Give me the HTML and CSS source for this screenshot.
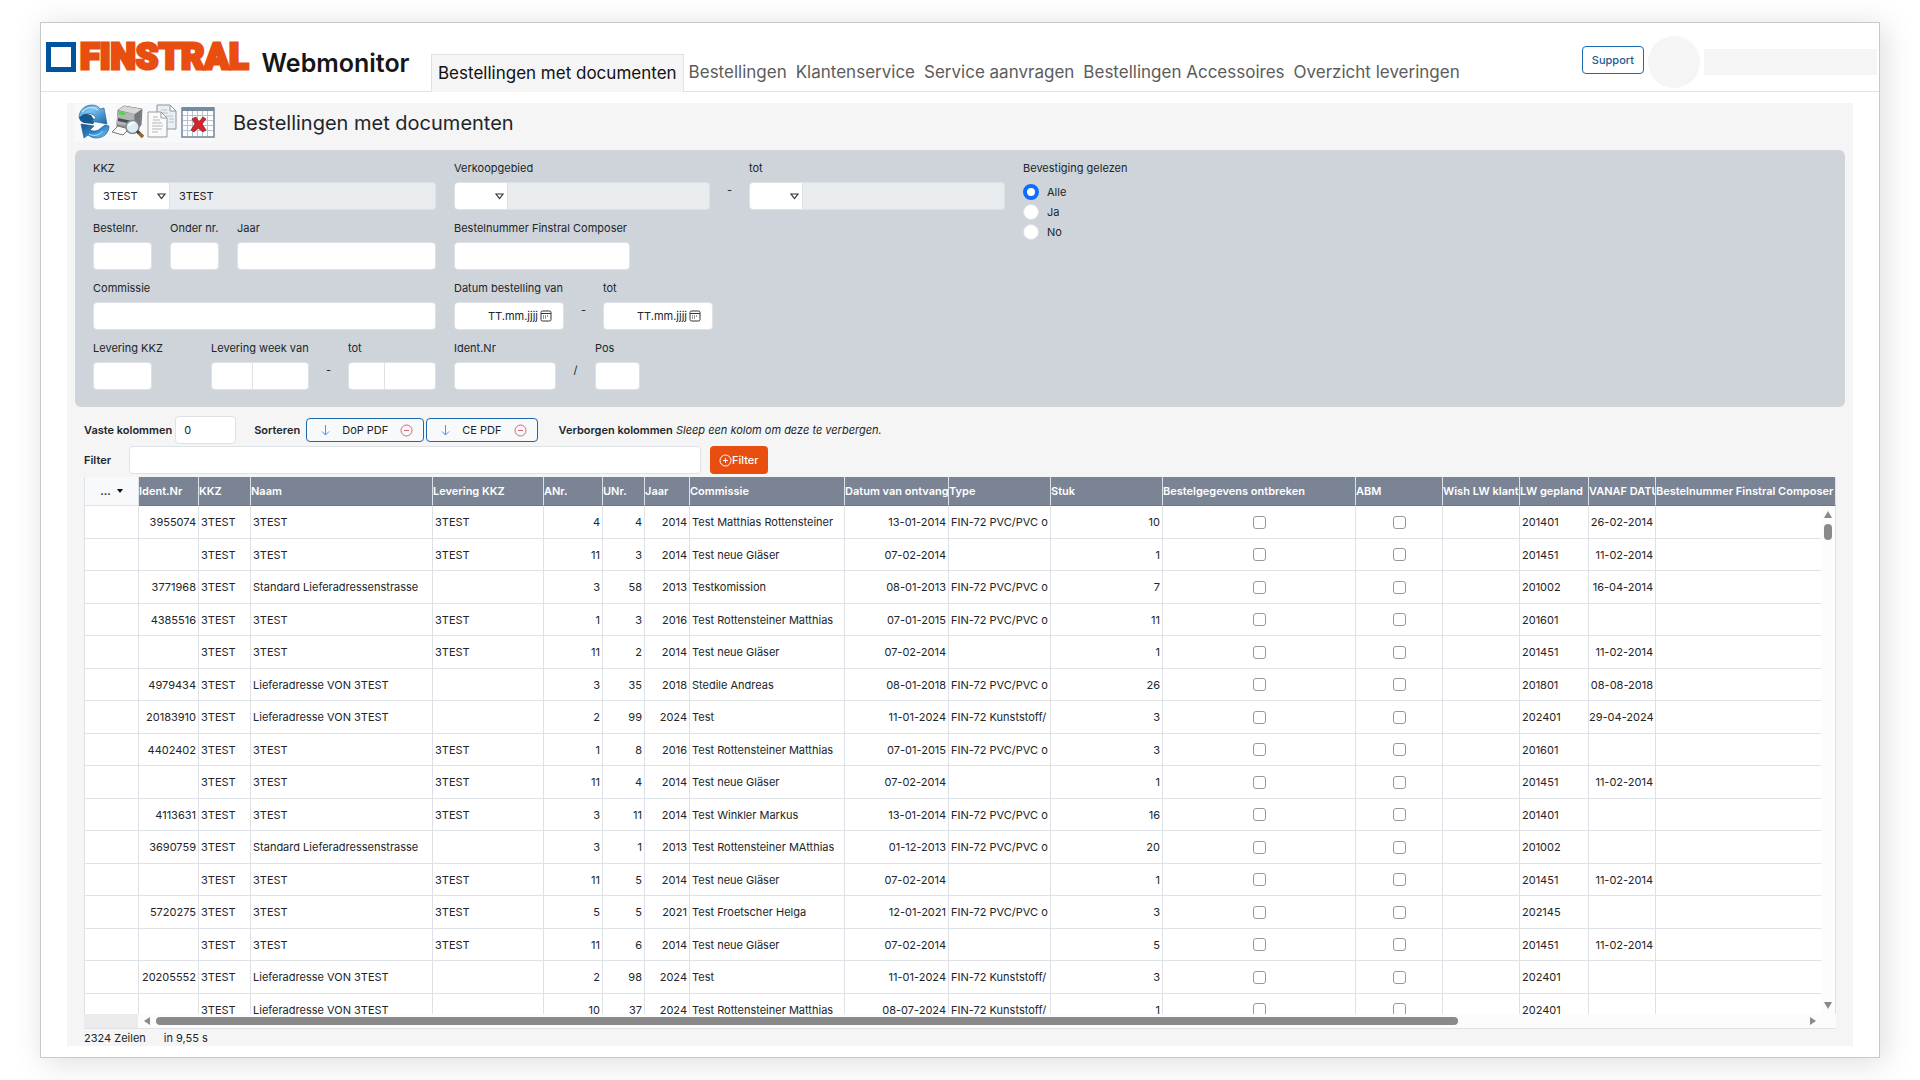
FILE: index.html
```html
<!DOCTYPE html>
<html lang="nl">
<head>
  <meta charset="UTF-8">
  <meta name="viewport" content="width=device-width, initial-scale=1.0">
  <title>Webmonitor</title>
  <link rel="stylesheet" href="styles.css">
</head>
<body>
  <div class="window">
    <header class="header">
      <a class="logo" href="#">
        <svg class="logo-mark" width="30" height="30" viewBox="0 0 30 30" aria-hidden="true"><path d="M2.5 2.5h25v25h-25z" fill="#fff" stroke="#00549f" stroke-width="5"/></svg>
        <span class="logo-name">FINSTRAL</span>
        <span class="logo-app">Webmonitor</span>
      </a>
      <nav class="tabs">
        <a class="tab active" href="#">Bestellingen met documenten</a>
        <a class="tab" href="#">Bestellingen</a>
        <a class="tab" href="#">Klantenservice</a>
        <a class="tab" href="#">Service aanvragen</a>
        <a class="tab" href="#">Bestellingen Accessoires</a>
        <a class="tab" href="#">Overzicht leveringen</a>
      </nav>
      <div class="user">
        <button class="support" type="button">Support</button>
        <span class="avatar"></span>
        <span class="user-name"></span>
      </div>
    </header>

    <main class="panel">
      <div class="toolbar">
        <div class="tools">
          <button class="tool" type="button" aria-label="Vernieuwen">
            <svg width="34" height="36" viewBox="0 0 34 36">
              <defs>
                <linearGradient id="blueTop" x1="0" y1="0" x2="1" y2="1"><stop offset="0" stop-color="#2f7fc2"/><stop offset=".35" stop-color="#7cc4f0"/><stop offset="1" stop-color="#1763a8"/></linearGradient>
                <linearGradient id="blueLow" x1="0" y1="0" x2="1" y2="1"><stop offset="0" stop-color="#15528c"/><stop offset=".5" stop-color="#2b84c8"/><stop offset="1" stop-color="#7cc6f2"/></linearGradient>
              </defs>
              <path d="M3 13c0 3 2 5 5 6l9 1 2-3-4-6-7-2z" fill="#17588f"/>
              <path d="M3 14C3 6 9 1 16 1c4 0 6 1 8 4l4-1 3 16-16-3 5-3c-2-4-6-5-10-4-3 0-5 2-7 4z" fill="url(#blueTop)" stroke="#1c5c96" stroke-width=".6"/>
              <path d="M5 20l13 2-4 4c4 2 8 1 11-2l4-3 4 1c0 7-5 12-13 12-3 0-5-1-8-3l-4 3z" fill="url(#blueLow)" stroke="#174f84" stroke-width=".6"/>
              <path d="M6 8c4-5 11-6 16-2" fill="none" stroke="#b4e2fb" stroke-width="1.5"/>
              <path d="M13 30c5 3 11 1 14-3" fill="none" stroke="#9ad6f8" stroke-width="1.2"/>
            </svg>
          </button>
          <button class="tool" type="button" aria-label="Afdrukvoorbeeld">
            <svg width="34" height="36" viewBox="0 0 34 36">
              <path d="M7 6l6-4 18 3-1 16-7 8-17-6z" fill="#8d8f91" stroke="#5e6062" stroke-width=".8"/>
              <path d="M7 6l6-4 18 3-7 5z" fill="#d6d8d9"/>
              <path d="M7 7l16 3v13L5 20z" fill="#b3b6b8"/>
              <path d="M24 10l6-4-1 15-5 5z" fill="#76797b"/>
              <path d="M7 14l14 3v3L7 17z" fill="#4b4d4f"/>
              <path d="M8 9l6 1" stroke="#3ee02d" stroke-width="2.500"/>
              <path d="M7 22l11 3-6 6-11-3z" fill="#f9f9f9" stroke="#777"/>
              <circle cx="21.500" cy="23" r="6.500" fill="#dcecf6" stroke="#85898d" stroke-width="1.500"/>
              <path d="M18 22c1-3 4-4 6-3" fill="none" stroke="#fff" stroke-width="2"/>
              <path d="M27 28l5 5" stroke="#8f6a35" stroke-width="3.500"/>
              <path d="M26 27l2 2" stroke="#444" stroke-width="3"/>
            </svg>
          </button>
          <button class="tool" type="button" aria-label="Kopiëren">
            <svg width="34" height="36" viewBox="0 0 34 36">
              <path d="M11 1h13l6 6v18H11z" fill="#e8eff7" stroke="#8f9499"/>
              <path d="M24 1v6h6z" fill="#fff" stroke="#8f9499"/>
              <path d="M15 6h6M15 9h7M20 12h7M23 15h5M23 18h5" stroke="#b8c0c8"/>
              <path d="M2 8h13l6 6v19H2z" fill="#fafafa" stroke="#999"/>
              <path d="M15 8v6h6z" fill="#fff" stroke="#999"/>
              <path d="M7 13h5M7 16h7M6 19h10M6 22h11M6 25h10M6 28h6" stroke="#b5b5b5"/>
            </svg>
          </button>
          <button class="tool" type="button" aria-label="Tabel wissen">
            <svg width="34" height="36" viewBox="0 0 34 36">
              <path d="M1 4h32v29H1z" fill="#fdfdfe" stroke="#718397" stroke-width="1.500"/>
              <path d="M1 3h32v4H1z" fill="#788a9d"/>
              <path d="M2 11.500h30M2 16.500h30M2 21.500h30M2 26.500h30M6.500 7v25M11.500 7v25M16.500 7v25M21.500 7v25M26.500 7v25" stroke="#b4c2d1"/>
              <path d="M11 15l4-2 3 5 4-5 3 2-4 5 4 6-3 2-5-4-4 4-3-2 4-6z" fill="#d5242c" stroke="#9e161c" stroke-width=".7"/>
            </svg>
          </button>
        </div>
        <h1 class="title">Bestellingen met documenten</h1>
      </div>

      <form class="search" onsubmit="return false">
        <div class="col-left">
          <div class="row">
            <div class="field grow">
              <label for="kkz">KKZ</label>
              <div class="joined">
                <select class="w77" id="kkz"><option>3TEST</option></select>
                <input class="grow" type="text" value="3TEST" aria-label="KKZ naam" readonly>
              </div>
            </div>
          </div>
          <div class="row">
            <div class="field"><label for="bestelnr">Bestelnr.</label><input class="w59" type="text" id="bestelnr"></div>
            <div class="field w49"><label for="ondernr">Onder nr.</label><input class="w49" type="text" id="ondernr"></div>
            <div class="field grow"><label for="jaar">Jaar</label><input type="text" id="jaar"></div>
          </div>
          <div class="row">
            <div class="field grow"><label for="commissie">Commissie</label><input type="text" id="commissie"></div>
          </div>
          <div class="row spread">
            <div class="field"><label for="levkkz">Levering KKZ</label><input class="w59" type="text" id="levkkz"></div>
            <div class="range">
              <div class="field">
                <label for="weekvan">Levering week van</label>
                <div class="joined"><input class="w42" type="text" id="weekvan"><input class="w56" type="text" aria-label="Jaar van"></div>
              </div>
              <span class="sep">-</span>
              <div class="field">
                <label for="weektot">tot</label>
                <div class="joined"><input class="w37" type="text" id="weektot"><input class="w51" type="text" aria-label="Jaar tot"></div>
              </div>
            </div>
          </div>
        </div>

        <div class="col-mid">
          <div class="row range">
            <div class="field grow">
              <label for="gebied">Verkoopgebied</label>
              <div class="joined"><select class="w54" id="gebied"><option></option></select><input class="grow" type="text" aria-label="Verkoopgebied naam" readonly></div>
            </div>
            <span class="sep">-</span>
            <div class="field grow">
              <label for="gebiedtot">tot</label>
              <div class="joined"><select class="w54" id="gebiedtot"><option></option></select><input class="grow" type="text" aria-label="Verkoopgebied tot naam" readonly></div>
            </div>
          </div>
          <div class="row">
            <div class="field"><label for="composer">Bestelnummer Finstral Composer</label><input class="w176" type="text" id="composer"></div>
          </div>
          <div class="row range">
            <div class="field">
              <label for="datumvan">Datum bestelling van</label>
              <div class="date">
                <input type="text" id="datumvan" placeholder="TT.mm.jjjj">
                <svg width="12" height="12" viewBox="0 0 12 12"><rect x="1" y="1" width="10" height="10" rx="1.500" fill="none" stroke="#333"/><path d="M1 3.500h10" stroke="#333"/><path d="M3 6h1m1 0h1m1 0h1M3 8h1m1 0h1" stroke="#333"/></svg>
              </div>
            </div>
            <span class="sep">-</span>
            <div class="field">
              <label for="datumtot">tot</label>
              <div class="date">
                <input type="text" id="datumtot" placeholder="TT.mm.jjjj">
                <svg width="12" height="12" viewBox="0 0 12 12"><rect x="1" y="1" width="10" height="10" rx="1.500" fill="none" stroke="#333"/><path d="M1 3.500h10" stroke="#333"/><path d="M3 6h1m1 0h1m1 0h1M3 8h1m1 0h1" stroke="#333"/></svg>
              </div>
            </div>
          </div>
          <div class="row range">
            <div class="field"><label for="ident">Ident.Nr</label><input class="w102" type="text" id="ident"></div>
            <span class="sep">/</span>
            <div class="field"><label for="pos">Pos</label><input class="w45" type="text" id="pos"></div>
          </div>
        </div>

        <fieldset class="radios">
          <legend>Bevestiging gelezen</legend>
          <label><input type="radio" name="gelezen" checked>Alle</label>
          <label><input type="radio" name="gelezen">Ja</label>
          <label><input type="radio" name="gelezen">No</label>
        </fieldset>
      </form>

      <div class="options">
        <label class="strong" for="vast">Vaste kolommen</label>
        <input class="fixed-count" type="text" id="vast" value="0">
        <span class="strong">Sorteren</span>
        <div class="chips">
          <button class="chip" type="button">
            <svg width="9" height="12" viewBox="0 0 9 12"><path d="M4.500 1v10M1 7.500l3.500 3.500L8 7.500" fill="none" stroke="#4a8dfb"/></svg>
            DoP PDF
            <svg width="13" height="13" viewBox="0 0 13 13"><circle cx="6.500" cy="6.500" r="5.500" fill="none" stroke="#e0626c"/><path d="M4 6.500h5" stroke="#e0626c"/></svg>
          </button>
          <button class="chip" type="button">
            <svg width="9" height="12" viewBox="0 0 9 12"><path d="M4.500 1v10M1 7.500l3.500 3.500L8 7.500" fill="none" stroke="#4a8dfb"/></svg>
            CE PDF
            <svg width="13" height="13" viewBox="0 0 13 13"><circle cx="6.500" cy="6.500" r="5.500" fill="none" stroke="#e0626c"/><path d="M4 6.500h5" stroke="#e0626c"/></svg>
          </button>
        </div>
        <span><b class="strong">Verborgen kolommen</b> <i>Sleep een kolom om deze te verbergen.</i></span>
      </div>

      <div class="filter">
        <label class="strong" for="filter">Filter</label>
        <input type="text" id="filter">
        <button class="filter-btn" type="button">
          <svg width="13" height="13" viewBox="0 0 13 13"><circle cx="6.500" cy="6.500" r="5.500" fill="none" stroke="#fff"/><path d="M4 6.500h5M6.500 4v5" stroke="#fff"/></svg>Filter
        </button>
      </div>

      <div class="grid">
        <div class="grid-view">
          <table>
            <colgroup>
              <col class="w55"><col class="w60"><col class="w52"><col class="w182"><col class="w111"><col class="w59"><col class="w42"><col class="w45"><col class="w155"><col class="w104"><col class="w102"><col class="w112"><col class="w193"><col class="w87"><col class="w77"><col class="w69"><col class="w67"><col>
            </colgroup>
            <thead>
              <tr>
                <th class="menu-cell"><button type="button">... <svg width="6" height="4" viewBox="0 0 6 4"><path d="M0 0h6L3 4z" fill="#111"/></svg></button></th>
                <th>Ident.Nr</th><th>KKZ</th><th>Naam</th><th>Levering KKZ</th><th>ANr.</th><th>UNr.</th><th>Jaar</th><th>Commissie</th><th>Datum van ontvangst</th><th>Type</th><th>Stuk</th><th>Bestelgegevens ontbreken</th><th>ABM</th><th>Wish LW klant</th><th>LW gepland</th><th>VANAF DATUM</th><th>Bestelnummer Finstral Composer</th>
              </tr>
            </thead>
            <tbody id="orders"></tbody>
          </table>
          <div class="vscroll">
            <svg width="8" height="7" viewBox="0 0 8 7"><path d="M4 0l4 7H0z" fill="#8a8a8a"/></svg>
            <span class="vthumb"></span>
            <svg class="end" width="8" height="7" viewBox="0 0 8 7"><path d="M0 0h8L4 7z" fill="#8a8a8a"/></svg>
          </div>
        </div>
        <div class="hscroll">
          <span class="corner"></span>
          <svg width="6" height="8" viewBox="0 0 6 8"><path d="M6 0v8L0 4z" fill="#8a8a8a"/></svg>
          <div class="track"><span class="hthumb"></span></div>
          <svg width="6" height="8" viewBox="0 0 6 8"><path d="M0 0v8l6-4z" fill="#8a8a8a"/></svg>
        </div>
      </div>
      <footer class="status"><span>2324 Zeilen</span><span>in 9,55 s</span></footer>
    </main>
  </div>

  <script>
    // ident, kkz, naam, levering, anr, unr, jaar, commissie, datum, type, stuk, lw gepland, vanaf datum
    const orders = [
      ["3955074", "3TEST", "3TEST", "3TEST", 4, 4, 2014, "Test Matthias Rottensteiner", "13-01-2014", "FIN-72 PVC/PVC o", 10, "201401", "26-02-2014"],
      ["", "3TEST", "3TEST", "3TEST", 11, 3, 2014, "Test neue Gläser", "07-02-2014", "", 1, "201451", "11-02-2014"],
      ["3771968", "3TEST", "Standard Lieferadressenstrasse", "", 3, 58, 2013, "Testkomission", "08-01-2013", "FIN-72 PVC/PVC o", 7, "201002", "16-04-2014"],
      ["4385516", "3TEST", "3TEST", "3TEST", 1, 3, 2016, "Test Rottensteiner Matthias", "07-01-2015", "FIN-72 PVC/PVC o", 11, "201601", ""],
      ["", "3TEST", "3TEST", "3TEST", 11, 2, 2014, "Test neue Gläser", "07-02-2014", "", 1, "201451", "11-02-2014"],
      ["4979434", "3TEST", "Lieferadresse VON 3TEST", "", 3, 35, 2018, "Stedile Andreas", "08-01-2018", "FIN-72 PVC/PVC o", 26, "201801", "08-08-2018"],
      ["20183910", "3TEST", "Lieferadresse VON 3TEST", "", 2, 99, 2024, "Test", "11-01-2024", "FIN-72 Kunststoff/", 3, "202401", "29-04-2024"],
      ["4402402", "3TEST", "3TEST", "3TEST", 1, 8, 2016, "Test Rottensteiner Matthias", "07-01-2015", "FIN-72 PVC/PVC o", 3, "201601", ""],
      ["", "3TEST", "3TEST", "3TEST", 11, 4, 2014, "Test neue Gläser", "07-02-2014", "", 1, "201451", "11-02-2014"],
      ["4113631", "3TEST", "3TEST", "3TEST", 3, 11, 2014, "Test Winkler Markus", "13-01-2014", "FIN-72 PVC/PVC o", 16, "201401", ""],
      ["3690759", "3TEST", "Standard Lieferadressenstrasse", "", 3, 1, 2013, "Test Rottensteiner MAtthias", "01-12-2013", "FIN-72 PVC/PVC o", 20, "201002", ""],
      ["", "3TEST", "3TEST", "3TEST", 11, 5, 2014, "Test neue Gläser", "07-02-2014", "", 1, "201451", "11-02-2014"],
      ["5720275", "3TEST", "3TEST", "3TEST", 5, 5, 2021, "Test Froetscher Helga", "12-01-2021", "FIN-72 PVC/PVC o", 3, "202145", ""],
      ["", "3TEST", "3TEST", "3TEST", 11, 6, 2014, "Test neue Gläser", "07-02-2014", "", 5, "201451", "11-02-2014"],
      ["20205552", "3TEST", "Lieferadresse VON 3TEST", "", 2, 98, 2024, "Test", "11-01-2024", "FIN-72 Kunststoff/", 3, "202401", ""],
      ["", "3TEST", "Lieferadresse VON 3TEST", "", 10, 37, 2024, "Test Rottensteiner Matthias", "08-07-2024", "FIN-72 Kunststoff/", 1, "202401", ""]
    ];

    function renderOrders() {
      const num = v => `<td class="num">${v}</td>`;
      const txt = v => `<td>${v}</td>`;
      const box = name => `<td class="check"><input type="checkbox" aria-label="${name}"></td>`;
      document.getElementById("orders").innerHTML = orders.map(o => `<tr><td></td>${num(o[0])}${txt(o[1])}${txt(o[2])}${txt(o[3])}${num(o[4])}${num(o[5])}${num(o[6])}${txt(o[7])}${num(o[8])}${txt(o[9])}${num(o[10])}${box("Bestelgegevens ontbreken")}${box("ABM")}<td></td>${txt(o[11])}${num(o[12])}<td></td></tr>`).join("");
    }

    renderOrders();
  </script>
</body>
</html>
```
FILE: styles.css
```css
* {
  box-sizing: border-box;
}
body {
  margin: 0;
  padding: 22px 40px;
  height: 100vh;
  background: #fff;
  color: #212529;
  font-family: Inter, "Liberation Sans", sans-serif;
  font-size: 11px;
  line-height: 16px;
}
button, input, select {
  font: inherit;
  color: inherit;
  margin: 0;
}
button {
  cursor: pointer;
}
a {
  color: inherit;
  text-decoration: none;
}
.window {
  display: flex;
  flex-direction: column;
  height: 100%;
  background: #fff;
  border: 1px solid #c6c8ca;
  box-shadow: 4px 4px 30px rgba(0,0,0,0.14);
}

/* header */
.header {
  display: flex;
  flex: none;
  height: 69px;
  border-bottom: 1px solid #dee2e6;
}
.logo {
  display: flex;
  flex: none;
  align-items: flex-end;
  width: 390px;
  padding: 0 0 19px 5px;
}
.logo-name {
  margin-left: 4px;
  color: #e84e0f;
  font-family: Roboto, sans-serif;
  font-size: 36px;
  font-weight: 900;
  line-height: 30px;
  -webkit-text-stroke: 3px #e84e0f;
}
.logo-app {
  margin-left: 13px;
  color: #161616;
  font-size: 25px;
  font-weight: 600;
  line-height: 18px;
}
.tabs {
  display: flex;
  flex: 1;
  align-items: flex-end;
  margin-bottom: -1px;
  font-size: 17px;
  line-height: 24px;
  color: #5c5c5c;
  white-space: nowrap;
}
.tab {
  height: 38px;
  padding: 6px 4px 0 5px;
}
.tab.active {
  padding: 6px 6px 0;
  background: #f5f5f5;
  border: 1px solid #dee2e6;
  border-bottom: 0;
  color: #111;
}
.user {
  display: flex;
  align-items: center;
  gap: 4px;
  padding: 10px 2px 0 0;
}
.support {
  height: 28px;
  margin-bottom: 4px;
  padding: 0 9px;
  background: #fff;
  border: 1px solid #1a69ac;
  border-radius: 4px;
  color: #1a5c94;
  font-weight: 500;
}
.avatar {
  width: 52px;
  height: 52px;
  border-radius: 50%;
  background: #f5f5f5;
}
.user-name {
  width: 173px;
  height: 26px;
  background: #f5f5f5;
}

/* page panel */
.panel {
  display: flex;
  flex: 1;
  flex-direction: column;
  min-height: 0;
  margin: 11px 26px;
  padding: 0 8px;
  background: #f5f5f5;
}
.toolbar {
  display: flex;
  align-items: center;
  gap: 18px;
  height: 47px;
  padding-bottom: 7px;
}
.tools {
  display: flex;
  background: #f8f9fb;
}
.tool {
  width: 35px;
  height: 38px;
  padding: 0;
  background: none;
  border: 0;
}
.title {
  margin: 0;
  font-size: 20px;
  font-weight: 400;
  line-height: 24px;
}

/* search form */
.search {
  display: flex;
  gap: 18px;
  padding: 10px 18px 17px;
  background: #ced4da;
  border-radius: 6px;
}
.col-left, .col-mid {
  display: flex;
  flex-direction: column;
  gap: 10px;
}
.col-left {
  width: 343px;
}
.col-mid {
  width: 551px;
}
.row {
  display: flex;
  gap: 18px;
}
.row.range, .range {
  display: flex;
  gap: 0;
}
.spread {
  justify-content: space-between;
}
.field {
  display: flex;
  flex-direction: column;
  gap: 6px;
  white-space: nowrap;
}
.grow {
  flex: 1;
  min-width: 0;
}
.search input[type="text"], .search select, .date {
  height: 28px;
  padding: 0 9px;
  background-color: #fff;
  border: 1px solid #dee2e6;
  border-radius: 4px;
}
.search select {
  appearance: none;
  background-image: url("data:image/svg+xml,%3Csvg xmlns='http://www.w3.org/2000/svg' width='9' height='7'%3E%3Cpath d='M1 1h7L4.500 5.500z' fill='none' stroke='%23333' stroke-width='1.2'/%3E%3C/svg%3E");
  background-position: right 3px center;
  background-repeat: no-repeat;
}
.search input[readonly] {
  background: #e9ecef;
}
.joined {
  display: flex;
}
.joined > :first-child {
  border-top-right-radius: 0 !important;
  border-bottom-right-radius: 0 !important;
}
.joined > :last-child {
  border-left: 0 !important;
  border-top-left-radius: 0 !important;
  border-bottom-left-radius: 0 !important;
}
.sep {
  width: 39px;
  padding-top: 22px;
  text-align: center;
}
.date {
  display: flex;
  align-items: center;
  gap: 2px;
  width: 110px;
}
.search .date {
  padding-right: 11px;
}
.search .date input {
  width: 100%;
  height: 24px;
  padding: 0;
  border: 0;
  text-align: right;
}
.date input::placeholder {
  color: #212529;
}
.date svg {
  flex: none;
}
.radios {
  margin: 0;
  padding: 0;
  border: 0;
}
.radios legend {
  padding: 0;
  margin-bottom: 6px;
}
.radios label {
  display: flex;
  align-items: center;
  gap: 8px;
  height: 20px;
}
.radios input {
  appearance: none;
  width: 16px;
  height: 16px;
  background: #fff;
  border: 1px solid #dee2e6;
  border-radius: 50%;
}
.radios input:checked {
  border: 4px solid #0d6efd;
}

/* column options and filter */
.options, .filter {
  display: flex;
  align-items: center;
  padding-left: 9px;
}
.options {
  height: 28px;
  margin-top: 9px;
}
.strong {
  font-weight: 600;
}
.fixed-count, .filter input {
  height: 28px;
  padding: 0 8px;
  background: #fff;
  border: 1px solid #dee2e6;
  border-radius: 4px;
}
.fixed-count {
  width: 61px;
  margin: 0 18px 0 3px;
}
.chips {
  display: flex;
  gap: 2px;
  margin: 0 21px 0 6px;
}
.chip {
  display: flex;
  align-items: center;
  gap: 12px;
  height: 24px;
  padding: 0 10px 0 14px;
  background: #f8f9fb;
  border: 1px solid #1a69ac;
  border-radius: 4px;
}
.filter {
  height: 28px;
  margin: 2px 0 3px;
}
.filter label {
  width: 45px;
}
.filter input {
  width: 572px;
}
.filter-btn {
  display: flex;
  align-items: center;
  height: 28px;
  margin-left: 9px;
  padding: 0 9px;
  background: #e84e0f;
  border: 0;
  border-radius: 4px;
  color: #fff;
  font-weight: 500;
}

/* order grid */
.grid {
  display: flex;
  flex: 1;
  flex-direction: column;
  min-height: 0;
  margin: 0 9px;
  border-bottom: 1px solid #dee2e6;
  background: #fff;
}
.grid-view {
  position: relative;
  flex: 1;
  min-height: 0;
  overflow: hidden;
}
table {
  width: 100%;
  table-layout: fixed;
  border-collapse: separate;
  border-spacing: 0;
}
th, td {
  padding: 0 0 0 2px;
  border-right: 1px solid #dee2e6;
  border-bottom: 1px solid #dee2e6;
  overflow: hidden;
  white-space: nowrap;
  text-align: left;
}
th:first-child, td:first-child {
  border-left: 1px solid #dee2e6;
}
th {
  height: 29px;
  padding: 0;
  background: #7a8495;
  border-bottom-color: #6c788a;
  color: #fff;
  font-weight: 600;
}
.menu-cell {
  background: #f8f9fb;
  border-bottom-color: #dee2e6;
}
.menu-cell button {
  display: flex;
  align-items: center;
  justify-content: center;
  gap: 6px;
  width: 100%;
  height: 28px;
  background: none;
  border: 0;
  color: #212529;
}
tbody tr:nth-child(odd) {
  height: 33px;
}
tbody tr:nth-child(even) {
  height: 32px;
}
.num {
  padding: 0 2px 0 0;
  text-align: right;
}
.check {
  padding: 0;
  text-align: center;
}
.check input {
  display: block;
  appearance: none;
  width: 13px;
  height: 13px;
  margin: 0 auto;
  background: #fff;
  border: 1px solid #999;
  border-radius: 3px;
}
.vscroll {
  position: absolute;
  top: 29px;
  right: 0;
  bottom: 0;
  display: flex;
  flex-direction: column;
  align-items: center;
  gap: 6px;
  width: 15px;
  padding: 5px 0;
  background: #fcfcfc;
  border-right: 1px solid #dee2e6;
}
.vthumb {
  width: 8px;
  height: 16px;
  border-radius: 4px;
  background: #8a8a8a;
}
.end {
  margin-top: auto;
}
.hscroll {
  display: flex;
  align-items: center;
  height: 14px;
  padding-right: 20px;
  background: #fcfcfc;
}
.corner {
  width: 54px;
  height: 14px;
  margin-right: 6px;
  background: #ebebeb;
}
.track {
  flex: 1;
  padding: 0 6px;
}
.hthumb {
  display: block;
  width: 79%;
  height: 8px;
  border-radius: 4px;
  background: #8a8a8a;
}
.status {
  display: flex;
  gap: 18px;
  padding: 1px 9px 0;
}

/* shared widths */
.w37 { width: 37px; }
.w42 { width: 42px; }
.w45 { width: 45px; }
.w49 { width: 49px; }
.w51 { width: 51px; }
.w52 { width: 52px; }
.w54 { width: 54px; }
.w55 { width: 55px; }
.w56 { width: 56px; }
.w59 { width: 59px; }
.w60 { width: 60px; }
.w67 { width: 67px; }
.w69 { width: 69px; }
.w77 { width: 77px; }
.w87 { width: 87px; }
.w102 { width: 102px; }
.w104 { width: 104px; }
.w111 { width: 111px; }
.w112 { width: 112px; }
.w155 { width: 155px; }
.w176 { width: 176px; }
.w182 { width: 182px; }
.w193 { width: 193px; }
```
